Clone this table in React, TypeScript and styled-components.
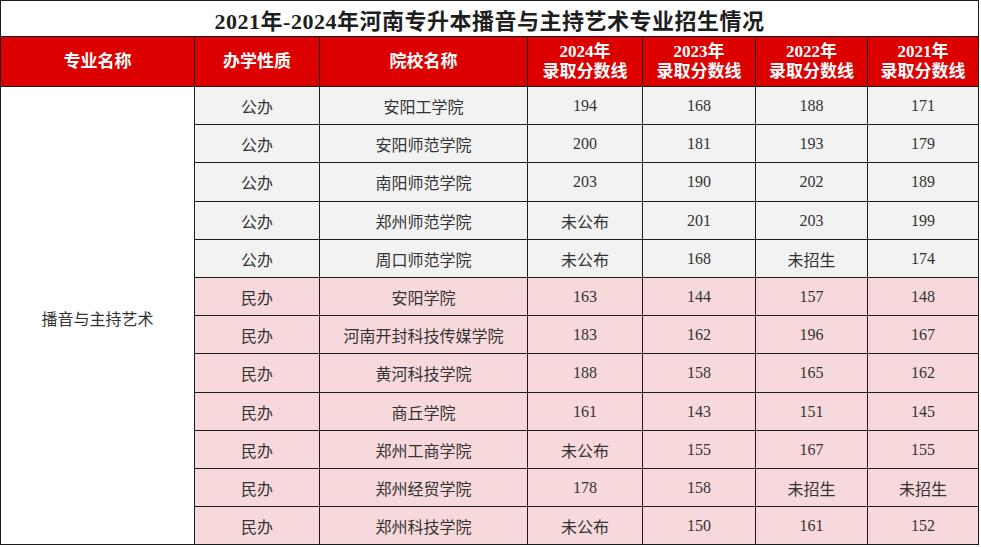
import styled, { createGlobalStyle } from "styled-components";

const GlobalStyle = createGlobalStyle`
  html, body {
    margin: 0;
    padding: 0;
    background: #ffffff;
  }
`;

const Page = styled.div`
  width: 981px;
  height: 547px;
  background: #ffffff;
`;

const Table = styled.table`
  width: 978px;
  table-layout: fixed;
  border-collapse: collapse;
  font-family: "Liberation Serif", "Noto Sans CJK SC", serif;
  color: #333333;
`;

const TitleRow = styled.tr`
  height: 36px;
`;

const TitleCell = styled.th`
  border: 1px solid #1c1c1c;
  background: #ffffff;
  color: #1e1e1e;
  font-size: 22px;
  font-weight: 700;
  letter-spacing: 0.5px;
  text-align: center;
  padding: 0;
`;

const HeadRow = styled.tr`
  height: 50px;
`;

const HeadCell = styled.th`
  border: 1px solid #1c1c1c;
  background: #dc0000;
  color: #ffffff;
  font-size: 17px;
  font-weight: 700;
  line-height: 20px;
  text-align: center;
  padding: 0;
`;

const DataRow = styled.tr`
  height: 38.2px;
`;

const Cell = styled.td<{ $tone: "public" | "private" | "plain" }>`
  border: 1px solid #1c1c1c;
  background: ${(p) =>
    p.$tone === "public" ? "#f2f2f2" : p.$tone === "private" ? "#f8d9db" : "#ffffff"};
  font-size: 16px;
  text-align: center;
  padding: 1px 0 0;
`;

const Major = styled(Cell)`
  padding-top: 4px;
`;

type School = {
  kind: string;
  name: string;
  scores: string[];
};

const schools: School[] = [
  { kind: "公办", name: "安阳工学院", scores: ["194", "168", "188", "171"] },
  { kind: "公办", name: "安阳师范学院", scores: ["200", "181", "193", "179"] },
  { kind: "公办", name: "南阳师范学院", scores: ["203", "190", "202", "189"] },
  { kind: "公办", name: "郑州师范学院", scores: ["未公布", "201", "203", "199"] },
  { kind: "公办", name: "周口师范学院", scores: ["未公布", "168", "未招生", "174"] },
  { kind: "民办", name: "安阳学院", scores: ["163", "144", "157", "148"] },
  { kind: "民办", name: "河南开封科技传媒学院", scores: ["183", "162", "196", "167"] },
  { kind: "民办", name: "黄河科技学院", scores: ["188", "158", "165", "162"] },
  { kind: "民办", name: "商丘学院", scores: ["161", "143", "151", "145"] },
  { kind: "民办", name: "郑州工商学院", scores: ["未公布", "155", "167", "155"] },
  { kind: "民办", name: "郑州经贸学院", scores: ["178", "158", "未招生", "未招生"] },
  { kind: "民办", name: "郑州科技学院", scores: ["未公布", "150", "161", "152"] },
];

const years = ["2024", "2023", "2022", "2021"];

export default function App() {
  return (
    <Page>
      <GlobalStyle />
      <Table>
        <colgroup>
          <col style={{ width: 194 }} />
          <col style={{ width: 125 }} />
          <col style={{ width: 208 }} />
          <col style={{ width: 115 }} />
          <col style={{ width: 113 }} />
          <col style={{ width: 112 }} />
          <col style={{ width: 111 }} />
        </colgroup>
        <thead>
          <TitleRow>
            <TitleCell colSpan={7}>2021年-2024年河南专升本播音与主持艺术专业招生情况</TitleCell>
          </TitleRow>
          <HeadRow>
            <HeadCell>专业名称</HeadCell>
            <HeadCell>办学性质</HeadCell>
            <HeadCell>院校名称</HeadCell>
            {years.map((y) => (
              <HeadCell key={y}>
                {y}年
                <br />
                录取分数线
              </HeadCell>
            ))}
          </HeadRow>
        </thead>
        <tbody>
          {schools.map((s, i) => {
            const tone = s.kind === "公办" ? "public" : "private";
            return (
              <DataRow key={s.name}>
                {i === 0 && (
                  <Major $tone="plain" rowSpan={schools.length}>
                    播音与主持艺术
                  </Major>
                )}
                <Cell $tone={tone}>{s.kind}</Cell>
                <Cell $tone={tone}>{s.name}</Cell>
                {s.scores.map((v, j) => (
                  <Cell key={j} $tone={tone}>
                    {v}
                  </Cell>
                ))}
              </DataRow>
            );
          })}
        </tbody>
      </Table>
    </Page>
  );
}
